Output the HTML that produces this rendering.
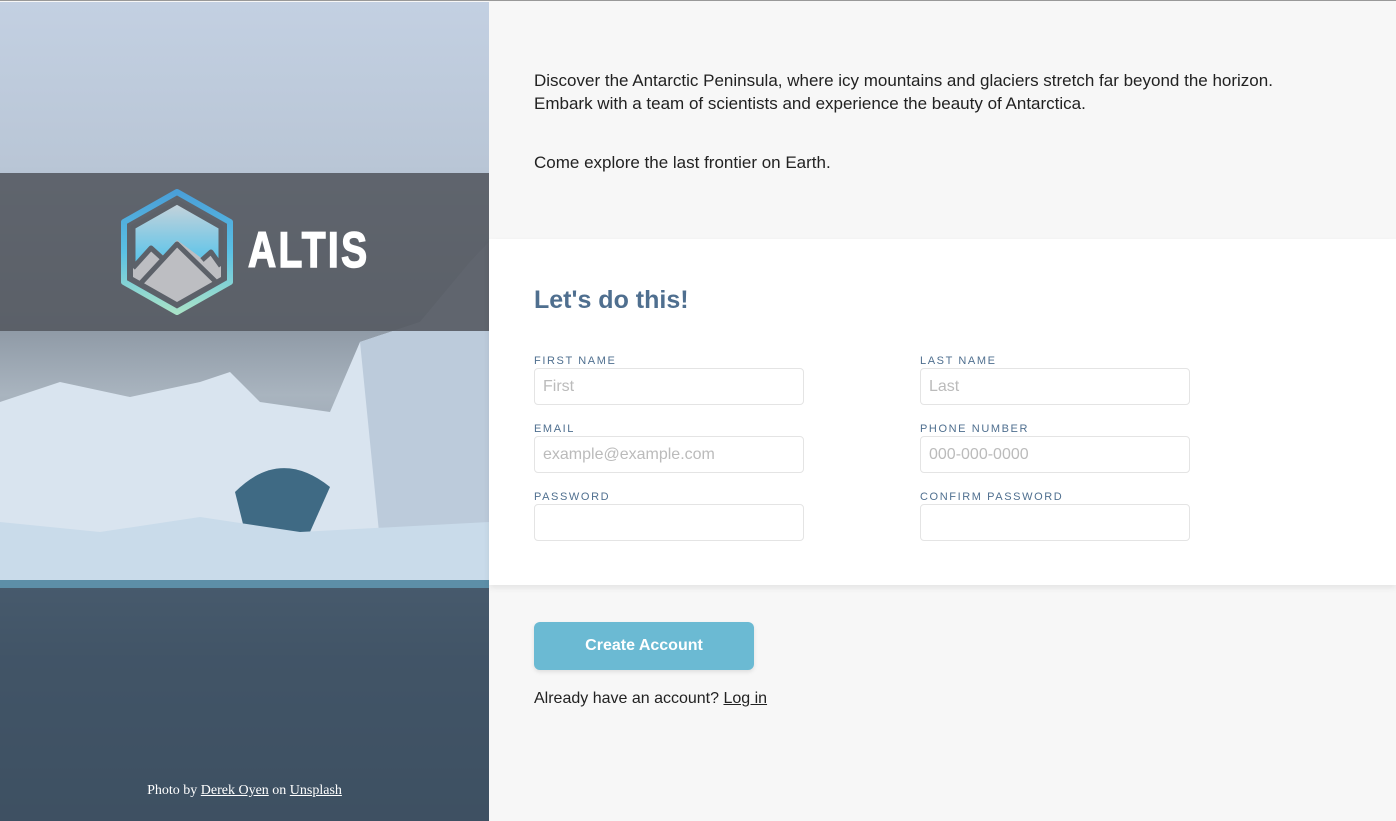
<!DOCTYPE html>
<html><head><style>
*{box-sizing:border-box;margin:0;padding:0}
body{width:1396px;height:820px;overflow:hidden;background:#f7f7f7;font-family:"Liberation Sans",sans-serif;position:relative;border-top:1px solid #999}
.left{position:absolute;left:0;top:1px;width:489px;height:819px;overflow:hidden;
background:linear-gradient(180deg,#c3d0e2 0%,#b9c6d6 20%,#8f9aa6 40%,#a9b4bf 48%,#8e9aa7 60%,#5e7283 72%,#4a5e70 80%,#3c4d5c 100%)}
.ice{position:absolute;left:0;top:0;width:489px;height:819px}
.band{position:absolute;left:0;top:171px;width:489px;height:158px;background:rgba(85,90,98,.9)}
.credit{position:absolute;left:0;width:489px;top:781px;text-align:center;color:#fff;font-family:"Liberation Serif",serif;font-size:14px}
.credit a{color:#fff}
.right{position:absolute;left:489px;top:1px;width:907px}
.intro{padding:67px 0 0 45px;height:237px;font-size:17px;line-height:23px;color:#222;width:815px}
.intro p+p{margin-top:36px}
.card{background:#fff;height:346px;box-shadow:0 3px 6px rgba(0,0,0,.08);padding:47px 0 0 45px;position:relative}
h2{font-size:25px;color:#4f6f8f;font-weight:bold}
.f{position:absolute;width:270px}
.f label{display:block;font-size:11px;letter-spacing:1.6px;color:#4f6f8f;margin-bottom:1px}
.f div{height:37px;border:1px solid #e4e4e4;border-radius:4px;padding:9px 8px;font-size:16px;color:#bbb}
.btn{position:absolute;left:45px;top:620px;width:220px;height:48px;background:#6bbad3;border-radius:6px;color:#fff;font-weight:bold;font-size:16px;text-align:center;line-height:48px;box-shadow:0 2px 4px rgba(0,0,0,.1)}
.login{position:absolute;left:45px;top:688px;font-size:16px;color:#222}
.login a{color:#222}
</style></head><body>
<div class="left">
<svg class="ice" viewBox="0 0 489 819">
<path d="M0 400 L60 380 L130 395 L200 380 L230 370 L260 400 L330 410 L360 340 L420 320 L470 260 L489 240 L489 585 L0 585Z" fill="#d9e4ef"/>
<path d="M360 340 L420 320 L470 260 L489 240 L489 560 L380 540 Z" fill="#bccbdb"/>
<path d="M235 490 Q280 445 330 485 L310 530 L245 530Z" fill="#3f6a84"/>
<path d="M0 520 L100 530 L200 515 L300 530 L489 520 L489 582 L0 582Z" fill="#c9dbea"/>
<rect x="0" y="578" width="489" height="8" fill="#5d8fa8"/>
<rect x="0" y="586" width="489" height="233" fill="#3f5264" opacity=".75"/>
</svg>
<div class="band"></div>
<svg style="position:absolute;left:118px;top:186px" width="118" height="128" viewBox="0 0 118 128">
<defs><linearGradient id="g" x1="0" y1="0" x2="0" y2="1"><stop offset="0" stop-color="#4a9fd8"/><stop offset=".5" stop-color="#5ac0e4"/><stop offset="1" stop-color="#a8e2c8"/></linearGradient>
<linearGradient id="s" x1="0" y1="0" x2="0" y2="1"><stop offset="0" stop-color="#c9d3da"/><stop offset=".6" stop-color="#59c4ea"/><stop offset="1" stop-color="#8fd6d8"/></linearGradient></defs>
<path d="M59 4 L112 34 L112 94 L59 124 L6 94 L6 34Z" fill="none" stroke="url(#g)" stroke-width="6" stroke-linejoin="round"/>
<path d="M59 14 L103 39 L103 89 L59 114 L15 89 L15 39Z" fill="url(#s)" stroke="#5c6169" stroke-width="5" stroke-linejoin="round"/>
<path d="M15 78 L33 58 L46 68 L59 52 L86 72 L95 64 L103 78 L103 89 L59 114 L15 89Z" fill="#bdbec2"/>
<path d="M15 80 L33 60 L44 70" fill="none" stroke="#5c6169" stroke-width="5" stroke-linejoin="round"/>
<path d="M22 96 L59 56 L98 94" fill="none" stroke="#5c6169" stroke-width="5" stroke-linejoin="round"/>
<path d="M84 72 L93 64 L103 78" fill="none" stroke="#5c6169" stroke-width="5" stroke-linejoin="round"/>
</svg>
<div style="position:absolute;left:248px;top:219px;color:#fff;font-weight:900;font-size:50px;letter-spacing:3px;transform:scaleX(.78);transform-origin:left;-webkit-text-stroke:1.5px #fff">ALTIS</div>
<div class="credit">Photo by <a href="#">Derek Oyen</a> on <a href="#">Unsplash</a></div>
</div>
<div class="right">
<div class="intro"><p>Discover the Antarctic Peninsula, where icy mountains and glaciers stretch far beyond the horizon. Embark with a team of scientists and experience the beauty of Antarctica.</p><p>Come explore the last frontier on Earth.</p></div>
<div class="card">
<h2>Let's do this!</h2>
<div class="f" style="left:45px;top:116px"><label>FIRST NAME</label><div>First</div></div>
<div class="f" style="left:431px;top:116px"><label>LAST NAME</label><div>Last</div></div>
<div class="f" style="left:45px;top:184px"><label>EMAIL</label><div>example@example.com</div></div>
<div class="f" style="left:431px;top:184px"><label>PHONE NUMBER</label><div>000-000-0000</div></div>
<div class="f" style="left:45px;top:252px"><label>PASSWORD</label><div></div></div>
<div class="f" style="left:431px;top:252px"><label>CONFIRM PASSWORD</label><div></div></div>
</div>
<div class="btn">Create Account</div>
<div class="login">Already have an account? <a href="#">Log in</a></div>
</div>
</body></html>
